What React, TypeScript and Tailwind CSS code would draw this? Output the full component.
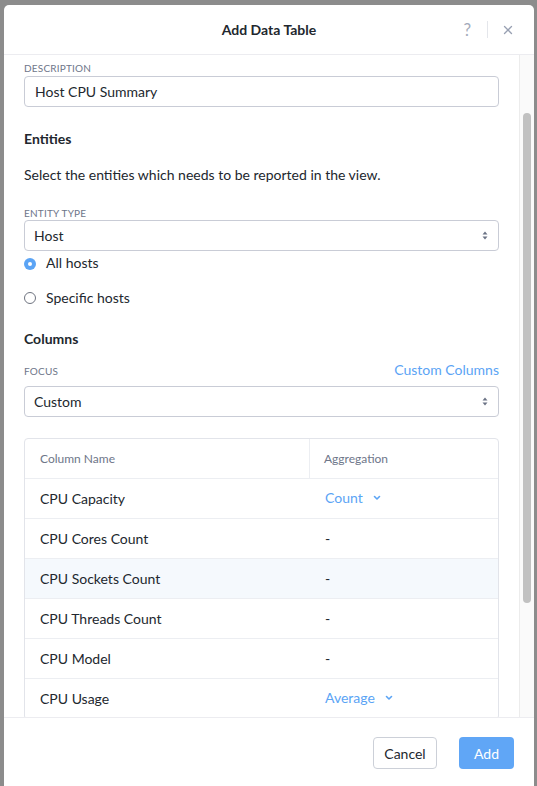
import { X } from 'lucide-react'

const rows = [
  { name: 'CPU Capacity', agg: 'Count' },
  { name: 'CPU Cores Count', agg: '-' },
  { name: 'CPU Sockets Count', agg: '-', hover: true },
  { name: 'CPU Threads Count', agg: '-' },
  { name: 'CPU Model', agg: '-' },
  { name: 'CPU Usage', agg: 'Average' },
]

function UpDown() {
  return (
    <svg width="6" height="9" viewBox="0 0 6 9" className="text-[#6b7385]">
      <path d="M3 0.5 L5.5 3.5 H0.5 Z" fill="currentColor" />
      <path d="M3 8.5 L5.5 5.5 H0.5 Z" fill="currentColor" />
    </svg>
  )
}

function Chevron() {
  return (
    <svg width="8" height="6" viewBox="0 0 8 6" className="ml-[10px]">
      <path d="M1.5 1.5 L4 4 L6.5 1.5" fill="none" stroke="#5ba4f5" strokeWidth="1.6" strokeLinecap="round" strokeLinejoin="round" />
    </svg>
  )
}

function Label({ children }: { children: React.ReactNode }) {
  return <div className="text-[10px] uppercase tracking-[0.2px] text-[#6e7689] leading-[12px]">{children}</div>
}

function Select({ value }: { value: string }) {
  return (
    <div className="flex items-center justify-between h-[31px] border border-[#c9ccd6] rounded-[4px] pl-[9px] pr-[10px] text-[14px] text-[#22272e]">
      <span>{value}</span>
      <UpDown />
    </div>
  )
}

export default function App() {
  return (
    <div className="w-[537px] h-[786px] bg-[#8c8c8c] pt-[5px] pl-[4px] overflow-hidden" style={{ fontFamily: 'Lato, "Open Sans", sans-serif' }}>
      <div className="w-[530px] h-[781px] bg-white rounded-t-[5px] flex flex-col">
        {/* Header */}
        <div className="relative h-[50px] shrink-0 border-b border-[#ececf0] flex items-center justify-center">
          <span className="text-[14px] font-bold text-[#22272e]">Add Data Table</span>
          <div className="absolute right-[19px] top-0 h-full flex items-center">
            <span className="text-[17px] text-[#a4abbb] mr-[16px]">?</span>
            <div className="w-px h-[17px] bg-[#e4e6eb] mr-[13px]" />
            <X className="w-[14px] h-[14px] text-[#98a0b2]" strokeWidth={2.2} />
          </div>
        </div>

        {/* Body */}
        <div className="flex flex-1 min-h-0">
          <div className="flex-1 overflow-hidden pl-[20px] pr-[20px] pt-[7px] text-[#22272e]">
            <Label>Description</Label>
            <div className="mt-[2px] h-[31px] border border-[#c9ccd6] rounded-[4px] pl-[10px] flex items-center text-[14px]">
              Host CPU Summary
            </div>

            <div className="mt-[21px] text-[14px] font-bold">Entities</div>
            <div className="mt-[15px] text-[14px]">Select the entities which needs to be reported in the view.</div>

            <div className="mt-[22px]"><Label>Entity Type</Label></div>
            <div className="mt-[1px]"><Select value="Host" /></div>

            <div className="mt-[4px] flex items-center h-[18px] text-[14px]">
              <span className="w-[12px] h-[12px] rounded-full bg-[#5ba4f5] flex items-center justify-center mr-[10px]">
                <span className="w-[4px] h-[4px] rounded-full bg-white" />
              </span>
              <span className="-mt-[4px]">All hosts</span>
            </div>
            <div className="mt-[16px] flex items-center h-[18px] text-[14px]">
              <span className="w-[12px] h-[12px] rounded-full border border-[#6f7480] mr-[10px]" />
              <span className="-mt-[1px]">Specific hosts</span>
            </div>

            <div className="mt-[21px] text-[14px] font-bold">Columns</div>

            <div className="mt-[12px] flex items-end justify-between">
              <Label>Focus</Label>
              <span className="text-[14px] text-[#5ba4f5] leading-[16px] translate-y-[1px]">Custom Columns</span>
            </div>
            <div className="mt-[9px]"><Select value="Custom" /></div>

            <div className="mt-[21px] border border-[#e2e4ea] rounded-[4px]">
              <div className="flex h-[40px] border-b border-[#eceef2] text-[12px] text-[#6e7689]">
                <div className="w-[285px] border-r border-[#eceef2] pl-[15px] flex items-center">Column Name</div>
                <div className="flex-1 pl-[14px] flex items-center">Aggregation</div>
              </div>
              {rows.map((r) => (
                <div key={r.name} className={`flex h-[40px] border-b border-[#eceef2] text-[14px] ${r.hover ? 'bg-[#f5f9fd]' : ''}`}>
                  <div className="w-[285px] pl-[15px] flex items-center">{r.name}</div>
                  <div className="flex-1 pl-[15px] flex items-center">
                    {r.agg === '-' ? (
                      <span>-</span>
                    ) : (
                      <span className="flex items-center text-[#5ba4f5] -mt-[2px]">
                        {r.agg}
                        <Chevron />
                      </span>
                    )}
                  </div>
                </div>
              ))}
            </div>
          </div>

          {/* scrollbar */}
          <div className="w-[15px] shrink-0 border-l border-[#ececec] bg-[#fafafa] flex justify-center">
            <div className="mt-[58px] w-[8px] h-[490px] rounded-full bg-[#c1c1c1]" />
          </div>
        </div>

        {/* Footer */}
        <div className="h-[69px] shrink-0 border-t border-[#ececf0] flex items-start justify-end pt-[19px] pr-[20px] gap-[22px]">
          <button className="h-[32px] w-[64px] border border-[#ccd0d8] rounded-[4px] text-[14px] text-[#22272e]">Cancel</button>
          <button className="h-[32px] w-[55px] rounded-[4px] bg-[#60a6f6] text-[14px] text-white">Add</button>
        </div>
      </div>
    </div>
  )
}
